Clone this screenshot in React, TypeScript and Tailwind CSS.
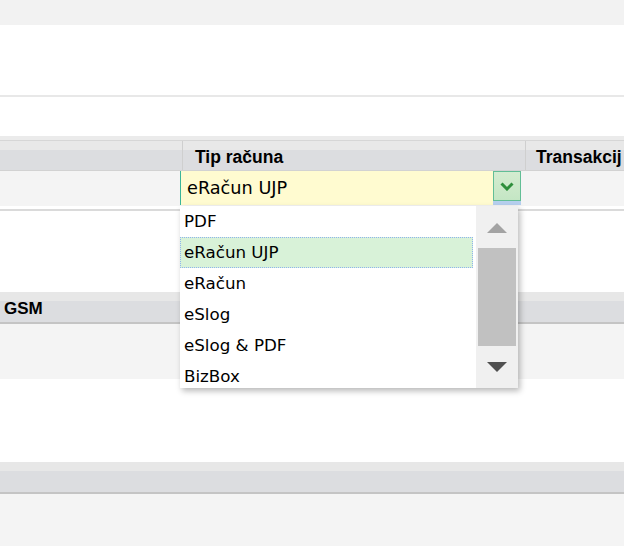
import React from "react";

const items = ["PDF", "eRačun UJP", "eRačun", "eSlog", "eSlog & PDF", "BizBox"];

function Header({ children }: { children?: React.ReactNode }) {
  return (
    <div className="h-[32px] bg-[linear-gradient(#e7e7e7_0,#e7e7e7_9px,#dcdde0_9px,#dcdde0_30px,#c4c4c4_30px)]">
      {children}
    </div>
  );
}

export default function App() {
  return (
    <div
      className="relative w-[624px] h-[546px] overflow-hidden bg-white text-black"
      style={{ fontFamily: '"Liberation Sans", Arial, sans-serif' }}
    >
      <div className="h-[25px] bg-[#f2f2f2]" />
      <div className="h-[70px] bg-white" />
      <div className="h-[2px] bg-[#e8e8e8]" />
      <div className="h-[39px] bg-white" />

      {/* Table 1 */}
      <div className="h-[4px] bg-[#ebebeb]" />
      <div className="h-px bg-[#d6d6d6]" />
      <div className="flex h-[30px] bg-[linear-gradient(#e8e8e8_0,#e8e8e8_9px,#dcdde0_9px)] border-b border-[#d2d2d2] text-[17.5px] font-bold leading-none">
        <div className="w-[182px] shrink-0" />
        <div className="w-[343px] shrink-0 border-l border-[#cfcfcf] pl-3 pt-[8px]">Tip računa</div>
        <div className="flex-1 min-w-0 overflow-hidden border-l border-[#cfcfcf] pl-[10px] pt-[8px] whitespace-nowrap">Transakcij</div>
      </div>
      <div className="flex h-[35px] bg-[#f4f4f4]">
        <div className="w-[180px] shrink-0" />
        <div
          className="w-[313px] shrink-0 h-[34px] bg-[#fffbd0] border-l border-[#3bb59a] pl-[6px] flex items-center text-[17.7px]"
          style={{ fontFamily: '"DejaVu Sans", Verdana, sans-serif' }}
        >
          eRačun UJP
        </div>
        <div className="w-[28px] shrink-0 flex flex-col">
          <div className="h-[30px] bg-[linear-gradient(#d4ecd0,#c4e6c4)] border border-[#62be96] flex items-center justify-center">
            <svg width="14" height="9" viewBox="0 0 14 9">
              <path d="M1.5 1.5 L7 7 L12.5 1.5" fill="none" stroke="#2f8f3c" strokeWidth="3" />
            </svg>
          </div>
          <div className="h-[4px] bg-[#b6cfee]" />
        </div>
        <div className="flex-1" />
      </div>
      <div className="h-[3px] bg-white" />
      <div className="h-[2px] bg-[#dadada]" />
      <div className="h-[81px] bg-white" />

      {/* Table 2 */}
      <Header>
        <div className="h-[30px] pl-[4px] pt-[8px] text-[17px] font-bold leading-none">GSM</div>
      </Header>
      <div className="h-[55px] bg-[#f4f4f4]" />
      <div className="h-[83px] bg-white" />

      {/* Table 3 */}
      <Header />
      <div className="h-[60px] bg-[#f4f4f4]" />

      {/* Dropdown list */}
      <div className="absolute left-[180px] top-[206px] w-[338px] h-[182px] bg-white flex shadow-[2px_3px_6px_rgba(0,0,0,0.28)]">
        <div
          className="flex-1 text-[16.7px] overflow-hidden"
          style={{ fontFamily: '"DejaVu Sans", Verdana, sans-serif' }}
        >
          {items.map((it, i) => (
            <div
              key={it}
              className={
                i === 1
                  ? "h-[31px] w-[293px] pl-[3px] pt-px flex items-center bg-[#d8f2d8] border border-dotted border-[#8fb4ee]"
                  : "h-[31px] w-[293px] pl-[4px] pt-px flex items-center"
              }
            >
              {it}
            </div>
          ))}
        </div>
        <div className="w-[42px] bg-[#f0f0f0] flex flex-col items-center pt-[17px]">
          <svg width="20" height="10" viewBox="0 0 20 10" className="shrink-0">
            <path d="M10 0 L20 10 L0 10 Z" fill="#a3a3a3" />
          </svg>
          <div className="mt-[15px] w-[38px] h-[98px] bg-[#c1c1c1]" />
          <svg width="20" height="10" viewBox="0 0 20 10" className="mt-[16px] shrink-0">
            <path d="M0 0 L20 0 L10 10 Z" fill="#505050" />
          </svg>
        </div>
      </div>
    </div>
  );
}
